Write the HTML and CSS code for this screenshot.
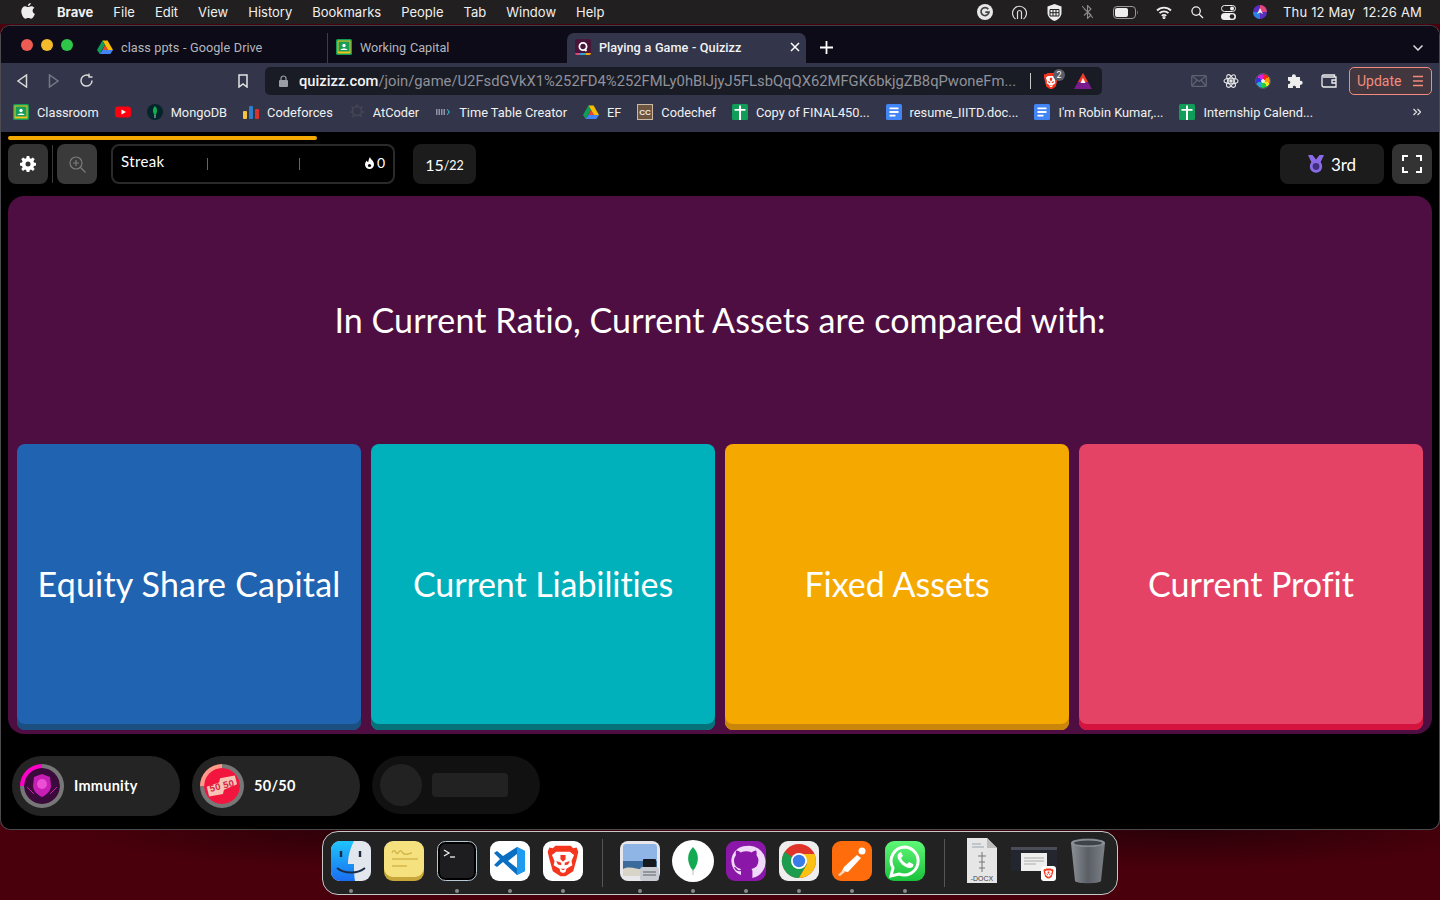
FILE: index.html
```html
<!DOCTYPE html>
<html lang="en">
<head>
    <meta charset="UTF-8">
    <meta name="viewport" content="width=device-width, initial-scale=1.0">
    <title>Playing a Game - Quizizz</title>
    <link rel="stylesheet" href="styles.css">
</head>
<body>
    <svg class="defs" width="0" height="0">
        <defs>
            <linearGradient id="finderblue" x1="0" y1="0" x2="0" y2="1"><stop offset="0" stop-color="#1fc4fb"/><stop offset="1" stop-color="#1a6ef0"/></linearGradient>
            <linearGradient id="wagreen" x1="0" y1="0" x2="0" y2="1"><stop offset="0" stop-color="#5ff777"/><stop offset="1" stop-color="#1ac23c"/></linearGradient>
            <linearGradient id="trash" x1="0" y1="0" x2="1" y2="0"><stop offset="0" stop-color="#8b9197"/><stop offset=".5" stop-color="#5a5f65"/><stop offset="1" stop-color="#7b8187"/></linearGradient>
        </defs>
        <symbol id="drive" viewBox="0 0 16 16">
            <path d="M5.400 1.500h5.200L16 11h-5.200z" fill="#fbbc04"/>
            <path d="M5.400 1.500 8 6 2.700 15 0 11z" fill="#0f9d58"/>
            <path d="M5.400 11H16l-2.700 4H2.700z" fill="#4285f4"/>
            <path d="M5.400 11 8 6l2.800 5z" fill="#ea4335"/>
        </symbol>
        <symbol id="classroom" viewBox="0 0 16 16">
            <rect width="16" height="16" rx="1.500" fill="#0f9d58"/>
            <rect x="1.500" y="1.500" width="13" height="13" fill="#f7c31b"/>
            <rect x="2.500" y="2.500" width="11" height="10" fill="#169d5a"/>
            <circle cx="8" cy="6.500" r="1.700" fill="#fff"/>
            <path d="M4.500 11c.4-2 6.600-2 7 0z" fill="#fff"/>
        </symbol>
        <symbol id="sheet" viewBox="0 0 16 16">
            <rect width="16" height="16" rx="1.500" fill="#0f9d58"/>
            <path d="M2.500 5H7V1.500h2V5h4.500v1.700H9V16H7V6.700H2.500z" fill="#fff"/>
        </symbol>
        <symbol id="doc" viewBox="0 0 16 16">
            <rect width="16" height="16" rx="1.500" fill="#4285f4"/>
            <path d="M3.500 3.500h9v1.800h-9zM3.500 7.100h9v1.800h-9zM3.500 10.700h6v1.800h-6z" fill="#fff"/>
        </symbol>
        <symbol id="bravelion" viewBox="0 0 40 40">
            <path d="M11 2h18l3 3 4-1 2 5-2 9-4 14-9 6h-6l-9-6L4 18 2 9l2-5 4 1z" fill="#f4361e"/>
            <path d="M12 9h16l5 4-3 7 1 5-7 4-1 4-3 1-3-1-1-4-7-4 1-5-3-7z" fill="#fff"/>
            <path d="M12 20l6 2v3l-4-1zM28 20l-6 2v3l4-1zM17 29h6l-3 2zM17 13h6v5l-3 3-3-3z" fill="#f4361e"/>
        </symbol>
    </svg>

    <header class="menubar">
        <svg class="apple" width="14" height="17" viewBox="0 0 14 17"><path d="M9.800 0c.1 1.300-1.300 3-2.900 2.900C6.700 1.500 8.300.1 9.800 0zM7 4.100c.8 0 1.900-.9 3.400-.9 1.100 0 2.300.6 3 1.600-2.600 1.500-2.200 5 .5 6.100-.8 2-2.300 4.800-3.800 4.800-1.100 0-1.500-.7-2.800-.7s-1.800.7-2.800.7C2.600 15.700.3 11.500.3 8.300c0-3 1.900-5 3.900-5 1.200 0 2.100.8 2.800.8z" fill="#eee"/></svg>
        <nav class="menus">
            <span class="app-name">Brave</span>
            <span>File</span><span>Edit</span><span>View</span><span>History</span><span>Bookmarks</span><span>People</span><span>Tab</span><span>Window</span><span>Help</span>
        </nav>
        <div class="status">
            <svg width="16" height="16" viewBox="0 0 16 16"><circle cx="8" cy="8" r="8" fill="#e8e8e8"/><path d="M11.300 5.200A4 4 0 1 0 12 8.200H8.300" fill="none" stroke="#444" stroke-width="1.700"/></svg>
            <svg width="15" height="16" viewBox="0 0 15 16" fill="none" stroke="#ddd" stroke-width="1.200"><path d="M3.500 15A7 7 0 1 1 11.500 15"/><path d="M5.500 15V8.500a2 2 0 0 1 4 0V15"/></svg>
            <svg class="st-wide" width="15" height="17" viewBox="0 0 15 17"><path d="M7.500 0l7 2.500V9c0 4-4 7-7 8-3-1-7-4-7-8V2.500z" fill="#eee"/><path d="M3 5.500h9v6.500H3zM3 8.700h9M6 5.500V12M9 5.500V12" fill="none" stroke="#222"/></svg>
            <svg class="st-wide" width="11" height="14" viewBox="0 0 11 14" fill="none" stroke="#8c8c8c" stroke-width="1.100"><path d="M2 3.500l7 6.500-3.500 3.500V.5L9 4 2 10.500M0 1l11 12"/></svg>
            <svg class="st-wide" width="26" height="13" viewBox="0 0 26 13"><rect x=".5" y=".5" width="22" height="12" rx="3.500" fill="none" stroke="#999"/><rect x="2" y="2" width="13" height="9" rx="2" fill="#eee"/><path d="M24 4.500c1 .5 1 3.500 0 4z" fill="#888"/></svg>
            <svg class="st-tight" width="16" height="13" viewBox="0 0 16 13" fill="none" stroke="#eee" stroke-width="1.800"><path d="M1 4.500a10 10 0 0 1 14 0M3.500 7.200a6.400 6.400 0 0 1 9 0M5.800 9.800a3 3 0 0 1 4.400 0"/><circle cx="8" cy="11.600" r=".6"/></svg>
            <svg width="13" height="13" viewBox="0 0 14 14" fill="none" stroke="#eee" stroke-width="1.400"><circle cx="5.500" cy="5.500" r="4.500"/><path d="M8.800 8.800 13 13"/></svg>
            <svg class="st-tight" width="15" height="15" viewBox="0 0 15 15"><rect x=".5" y=".5" width="14" height="6" rx="3" fill="none" stroke="#eee"/><circle cx="11" cy="3.500" r="2" fill="#eee"/><rect y="8" width="15" height="7" rx="3.500" fill="#eee"/><circle cx="11" cy="11.500" r="2.300" fill="#222"/></svg>
            <svg class="st-tight" width="14" height="14" viewBox="0 0 14 14"><circle cx="7" cy="7" r="7" fill="#5a2fc0"/><path d="M7 0a7 7 0 0 1 7 7H7z" fill="#e0457b"/><path d="M0 7a7 7 0 0 0 7 7V7z" fill="#2f7fe0"/><path d="M7 3l3 6-3-1.500L4 9z" fill="#eee"/></svg>
            <span class="clock">Thu 12 May&nbsp; 12:26 AM</span>
        </div>
    </header>

    <main class="window">
        <div class="tabstrip">
            <div class="lights"><i class="red"></i><i class="yellow"></i><i class="green"></i></div>
            <div class="tab tab-first"><svg class="ico"><use href="#drive"/></svg><span>class ppts - Google Drive</span></div>
            <div class="tab tab-second"><svg class="ico"><use href="#classroom"/></svg><span>Working Capital</span></div>
            <div class="tab tab-active">
                <svg class="ico" viewBox="0 0 16 16"><rect width="16" height="16" rx="2" fill="#4a1538"/><path d="M0 14h5v2H2a2 2 0 0 1-2-2z" fill="#e0457b"/><path d="M5 14h6v2H5z" fill="#2ca5d6"/><path d="M11 14h5a2 2 0 0 1-2 2h-3z" fill="#f5a800"/><circle cx="8" cy="7.500" r="3.600" fill="none" stroke="#fff" stroke-width="1.800"/><path d="M9.500 10l2 2" stroke="#fff" stroke-width="1.800"/></svg>
                <span>Playing a Game - Quizizz</span>
                <svg class="tab-close" width="10" height="10" viewBox="0 0 10 10" stroke="#fff" stroke-width="1.500"><path d="M1 1l8 8M9 1l-8 8"/></svg>
            </div>
            <svg class="tab-new" width="13" height="13" viewBox="0 0 13 13" stroke="#fff" stroke-width="1.800"><path d="M6.500 0v13M0 6.500h13"/></svg>
            <svg class="tab-list" width="10" height="6" viewBox="0 0 10 6" fill="none" stroke="#ddd" stroke-width="1.500"><path d="M.5.500l4.500 4.500L9.500.500"/></svg>
        </div>

        <div class="toolbar">
            <svg class="nav-back" width="12" height="14" viewBox="0 0 12 14" fill="none" stroke="#d8d8d8" stroke-width="1.500"><path d="M10.500 1v12L2 7z"/></svg>
            <svg class="nav-fwd" width="12" height="14" viewBox="0 0 12 14" fill="none" stroke="#767885" stroke-width="1.500"><path d="M1.500 1v12L10 7z"/></svg>
            <svg class="nav-reload" width="15" height="15" viewBox="0 0 15 15" fill="none" stroke="#d8d8d8" stroke-width="1.500"><path d="M13 7.500A5.500 5.500 0 1 1 10.500 3"/><path d="M10 .5v3.500h3.500" stroke-width="1.300"/></svg>
            <svg class="nav-mark" width="10" height="14" viewBox="0 0 10 14" fill="none" stroke="#e4e4e4" stroke-width="1.500"><path d="M1 1h8v12L5 10l-4 3z"/></svg>
            <div class="urlbar">
                <svg width="9" height="12" viewBox="0 0 9 12"><rect y="5" width="9" height="7" rx="1" fill="#9b9da6"/><path d="M2 5V3.500a2.500 2.500 0 0 1 5 0V5" fill="none" stroke="#9b9da6" stroke-width="1.200"/></svg>
                <span class="url"><b>quizizz.com</b>/join/game/U2FsdGVkX1%252FD4%252FMLy0hBlJjyJ5FLsbQqQX62MFGK6bkjgZB8qPwoneFm...</span>
                <i class="url-sep"></i>
                <div class="shield"><svg width="16" height="18" viewBox="0 0 40 40" preserveAspectRatio="none"><use href="#bravelion"/></svg><em>2</em></div>
                <svg class="bat" width="18" height="16" viewBox="0 0 18 16"><path d="M9 0l9 16H0z" fill="#7a1a8c"/><path d="M9 0l5 9H4z" fill="#ef3e23"/><path d="M9 5l2.500 5h-5z" fill="#fff"/></svg>
            </div>
            <div class="extensions">
                <svg width="16" height="12" viewBox="0 0 16 12" fill="none" stroke="#5e6070" stroke-width="1.300"><rect x=".7" y=".7" width="14.600" height="10.600" rx="1"/><path d="M1 1l7 5.500L15 1M1 11l5-6M15 11l-5-6"/></svg>
                <svg width="16" height="16" viewBox="0 0 16 16" fill="none" stroke="#e4e4e4" stroke-width="1.100"><ellipse cx="8" cy="8" rx="7" ry="2.800"/><ellipse cx="8" cy="8" rx="7" ry="2.800" transform="rotate(60 8 8)"/><ellipse cx="8" cy="8" rx="7" ry="2.800" transform="rotate(120 8 8)"/><circle cx="8" cy="8" r="1.200" fill="#e4e4e4"/></svg>
                <div class="colorwheel"></div>
                <svg width="16" height="16" viewBox="0 0 16 16"><path d="M1 4h4c-1-3 4-4 4 0h4v4c3-1 4 4 0 4v3H9c.5-3-4-3-3 0H1v-4c3 1 3-4 0-3z" fill="#eee"/></svg>
                <svg class="wallet" width="16" height="14" viewBox="0 0 16 14" fill="none" stroke="#eee" stroke-width="1.300"><path d="M13.500 3V1H3A2 2 0 0 0 1 3v8a2 2 0 0 0 2 2h12V3H2"/><path d="M15 6h-4v3h4"/></svg>
            </div>
            <div class="update"><span>Update</span><svg width="10" height="12" viewBox="0 0 10 12" stroke="#f28b7d" stroke-width="1.600"><path d="M0 1.500h10M0 6h10M0 10.500h10"/></svg></div>
        </div>

        <div class="bookmarks">
            <div class="bm"><svg class="ico"><use href="#classroom"/></svg><span>Classroom</span></div>
            <div class="bm"><svg class="ico" viewBox="0 0 16 16"><rect y="2.500" width="16" height="11" rx="3" fill="#f01"/><path d="M6.500 5.500 11 8l-4.500 2.500z" fill="#fff"/></svg></div>
            <div class="bm"><svg class="ico" viewBox="0 0 16 16"><circle cx="8" cy="8" r="8" fill="#04242b"/><path d="M8 2c2.500 2.500 3 6 0 10-3-4-2.500-7.500 0-10z" fill="#13aa52"/><path d="M8 11v3" stroke="#b8c4c2"/></svg><span>MongoDB</span></div>
            <div class="bm"><svg class="ico" viewBox="0 0 16 16"><rect y="7" width="4" height="8" rx="1" fill="#f6c43d"/><rect x="6" y="2" width="4" height="13" rx="1" fill="#2f7fc8"/><rect x="12" y="5" width="4" height="10" rx="1" fill="#d8322e"/></svg><span>Codeforces</span></div>
            <div class="bm"><svg class="ico" viewBox="0 0 16 16" fill="none" stroke="#444653" stroke-width="1.500"><circle cx="8" cy="7" r="4.500"/><path d="M8 0v2M1 8h2.500M13 8h2.500M2.500 2.500l2 2M13.500 2.500l-2 2M3 13l2.500-2.500M13 13l-2.500-2.500"/></svg><span>AtCoder</span></div>
            <div class="bm"><svg class="ico" viewBox="0 0 16 16"><path d="M1 5h1.500v6H1zM3.500 5H5v6H3.500zM6 5h1.500v6H6zM8.500 5H10v6H8.500z" fill="#8f93a3"/><path d="M11.500 5h1l2.500 3-2.500 3h-1l2-3z" fill="#29b6c6"/></svg><span>Time Table Creator</span></div>
            <div class="bm"><svg class="ico"><use href="#drive"/></svg><span>EF</span></div>
            <div class="bm"><svg class="ico" viewBox="0 0 16 16"><rect width="16" height="16" fill="#c9b9a5"/><rect x="1" y="1" width="14" height="14" fill="#6e5540"/><text x="8" y="11" font-size="8" font-weight="700" text-anchor="middle" fill="#f1ebe2" font-family="Liberation Sans">CC</text></svg><span>Codechef</span></div>
            <div class="bm"><svg class="ico"><use href="#sheet"/></svg><span>Copy of FINAL450...</span></div>
            <div class="bm"><svg class="ico"><use href="#doc"/></svg><span>resume_IIITD.doc...</span></div>
            <div class="bm"><svg class="ico"><use href="#doc"/></svg><span>I'm Robin Kumar,...</span></div>
            <div class="bm"><svg class="ico"><use href="#sheet"/></svg><span>Internship Calend...</span></div>
            <svg class="bm-more" width="8" height="8" viewBox="0 0 8 8" fill="none" stroke="#ddd" stroke-width="1.300"><path d="M.5 1l3 3-3 3M4.500 1l3 3-3 3"/></svg>
        </div>

        <section class="game">
            <div class="progress"><div class="progress-fill" style="width: 309px"></div></div>
            <div class="topbar">
                <button class="square">
                    <svg width="16" height="16" viewBox="0 0 16 16"><path d="M6.700 0h2.600l.4 2.200 1.300.6L12.900 1.500l1.800 1.800-1.300 1.900.6 1.300 2 .4v2.600l-2 .4-.6 1.300 1.300 1.900-1.800 1.800-1.900-1.300-1.300.6-.4 2.200H6.700l-.4-2.200-1.300-.6-1.900 1.300-1.800-1.800 1.300-1.900-.6-1.300-2-.4V6.900l2-.4.6-1.300-1.300-1.900 1.800-1.800L5 2.800l1.300-.6z" fill="#fff"/><circle cx="8" cy="8" r="2.500" fill="#333"/></svg>
                </button>
                <i class="divider"></i>
                <button class="square square-dim">
                    <svg width="17" height="17" viewBox="0 0 17 17" fill="none" stroke="#7c7c7c" stroke-width="1.200"><circle cx="7" cy="7" r="6"/><path d="M11.500 11.500 16.500 16.500M4 7h6M7 4v6"/></svg>
                </button>
                <div class="streak">
                    <span class="streak-label">Streak</span>
                    <i class="tick tick-one"></i>
                    <i class="tick tick-two"></i>
                    <span class="streak-count"><svg width="9" height="12" viewBox="0 0 9 12"><path d="M5 0c.5 2.500 4 3.500 4 7.500a4.500 4.500 0 0 1-9 0C0 5.500 1 4.500 2 3.500c.2 1 .6 1.500 1.200 1.700C3.500 3.500 4 1.500 5 0z" fill="#fff"/><circle cx="4.500" cy="8.500" r="1.600" fill="#000"/></svg>0</span>
                </div>
                <div class="count"><b>15</b>/22</div>
                <div class="rank">
                    <svg width="16" height="18" viewBox="0 0 16 18"><path d="M0 0h4.500L8 4.500 11.500 0H16l-4 8.500H4z" fill="#8a6ae6"/><circle cx="8" cy="11.500" r="4.800" fill="#3f2f7c" stroke="#8a6ae6" stroke-width="2.800"/></svg>
                    <span>3rd</span>
                </div>
                <button class="square">
                    <svg width="20" height="18" viewBox="0 0 20 18" fill="none" stroke="#fff" stroke-width="2"><path d="M1 6V1h5M14 1h5v5M19 12v5h-5M6 17H1v-5"/></svg>
                </button>
            </div>

            <div class="panel">
                <h1 class="question">In Current Ratio, Current Assets are compared with:</h1>
                <div class="options">
                    <div class="option option-blue">Equity Share Capital</div>
                    <div class="option option-teal">Current Liabilities</div>
                    <div class="option option-amber">Fixed Assets</div>
                    <div class="option option-rose">Current Profit</div>
                </div>
            </div>

            <div class="powerups">
                <div class="powerup">
                    <div class="ring ring-pink">
                        <svg width="36" height="36" viewBox="0 0 36 36"><circle cx="18" cy="18" r="18" fill="#3a0a3a"/><path d="M18 6l8 3 1 9c0 5-5 9-9 11-4-2-9-6-9-11l1-9z" fill="#c81eb4"/><circle cx="18" cy="16" r="5" fill="#ea4fd6"/><path d="M3 19l7 7M33 19l-7 7" stroke="#c81eb4"/></svg>
                    </div>
                    <span>Immunity</span>
                </div>
                <div class="powerup">
                    <div class="ring ring-salmon">
                        <svg width="36" height="36" viewBox="0 0 36 36"><circle cx="18" cy="18" r="18" fill="#f2163f"/><g transform="rotate(-14 18 18)"><path d="M3 15l13-1 2-4 15 1v9l-14 2-2 4-14-1z" fill="#f7c5b8"/><text x="18" y="21" font-size="9.500" font-weight="700" text-anchor="middle" fill="#d8233f" font-family="Liberation Sans">50 50</text></g></svg>
                    </div>
                    <span>50/50</span>
                </div>
                <div class="powerup powerup-empty">
                    <div class="blank-circle"></div>
                    <div class="blank-label"></div>
                </div>
            </div>
        </section>
    </main>

    <footer class="dock-wrap">
        <div class="dock">
            <div class="dock-item on">
                <svg viewBox="0 0 40 40"><rect width="40" height="40" rx="9" fill="#e2e7ee"/><path d="M9 0h14c-3 6-6 14-6 23h6c0 6 0 12 1 17H9a9 9 0 0 1-9-9V9a9 9 0 0 1 9-9z" fill="url(#finderblue)"/><path d="M10 10v6M29 10v6" stroke="#1d2a44" stroke-width="2.400"/><path d="M6 27c7 6 21 6 28 0" fill="none" stroke="#1d2a44" stroke-width="1.800"/></svg>
            </div>
            <div class="dock-item">
                <svg viewBox="0 0 40 40"><rect y="4" width="40" height="36" rx="9" fill="#c9a63a"/><rect width="40" height="36" rx="9" fill="#f5e27e"/><path d="M8 12c3-7 4 3 6 0s3-3 5 0 6 0 9 0M8 18h26M8 25h15" fill="none" stroke="#d3b84c" stroke-width="1.500"/></svg>
            </div>
            <div class="dock-item on">
                <svg viewBox="0 0 40 40"><rect x=".5" y=".5" width="39" height="39" rx="8" fill="#000" stroke="#b8c8d4"/><rect x="3" y="3" width="34" height="34" rx="5" fill="#1d1d1f"/><path d="M7 9l5 3-5 3" fill="none" stroke="#eee" stroke-width="1.300"/><path d="M13 16h5" stroke="#eee" stroke-width="1.300"/></svg>
            </div>
            <div class="dock-item on">
                <svg viewBox="0 0 40 40"><rect width="40" height="40" rx="9" fill="#fff"/><path d="M27 6l8 4v20l-8 4-14-13-6 5-3-2 6-6-6-6 3-2 6 5z" fill="#0a6fc2"/><path d="M27 13v14l-9-7z" fill="#fff"/><path d="M27 6l8 4v20l-8 4z" fill="#1f9cf0"/></svg>
            </div>
            <div class="dock-item on">
                <svg viewBox="0 0 40 40"><rect width="40" height="40" rx="9" fill="#fff"/><use href="#bravelion" x="3" y="2" width="34" height="36"/></svg>
            </div>
            <i class="dock-sep"></i>
            <div class="dock-item on">
                <svg viewBox="0 0 40 40"><rect width="40" height="40" rx="8" fill="#e8e8ec"/><rect x="3" y="3" width="34" height="32" rx="3" fill="#8fb4e6"/><path d="M3 20h34v15H3z" fill="#3c6a9a"/><path d="M3 28c8-4 16 2 22 0v7H3z" fill="#d8d4c8"/><rect x="20" y="26" width="19" height="14" rx="3" fill="#c8ccd2"/><rect x="23" y="18" width="13" height="8" rx="1" fill="#15181d"/><path d="M23 31h13M23 34h13" stroke="#5a6068"/></svg>
            </div>
            <div class="dock-item on">
                <svg viewBox="0 0 40 40"><circle cx="20" cy="20" r="21" fill="#fff"/><path d="M20 6c6 6 7 15 0 24-7-9-6-18 0-24z" fill="#13aa52"/><path d="M20 28v6" stroke="#b8c4c2"/></svg>
            </div>
            <div class="dock-item on">
                <svg viewBox="0 0 40 40"><rect width="40" height="40" rx="9" fill="#8a17a8"/><path d="M20 5a15 15 0 0 0-5 29v-4c-5 1-6-2-7-4 2 0 3 2 4 3 2 .5 3 0 3-1-4-1-7-3-7-9 0-2 1-3 2-5-.5-1.500-.3-3 .2-4.500 2 0 3.500 1 4.500 2a14 14 0 0 1 11 0c1-1 2.500-2 4.500-2 .5 1.500.7 3 .2 4.500 1 2 2 3 2 5 0 6-3 8-7 9 1 1 1 2 1 3v6A15 15 0 0 0 20 5z" fill="#f0d8f8"/></svg>
            </div>
            <div class="dock-item on">
                <svg viewBox="0 0 40 40"><rect width="40" height="40" rx="9" fill="#eee"/><circle cx="20" cy="20" r="17" fill="#e0332a"/><path d="M20 20 5.500 11A17 17 0 0 0 20 37l8-14z" fill="#1c9d4d"/><path d="M20 37a17 17 0 0 0 15.500-24H20l8 10z" fill="#fbc113"/><circle cx="20" cy="20" r="8" fill="#fff"/><circle cx="20" cy="20" r="6.200" fill="#3b7de8"/></svg>
            </div>
            <div class="dock-item on">
                <svg viewBox="0 0 40 40"><rect width="40" height="40" rx="9" fill="#ff6c0c"/><circle cx="30" cy="10" r="3.500" fill="#fff"/><path d="M10 30l2-4 13-12 4 3-13 14z" fill="#fff"/><path d="M6 34l5-5 2 2-5 4z" fill="#ffd7bc"/></svg>
            </div>
            <div class="dock-item on">
                <svg viewBox="0 0 40 40"><rect width="40" height="40" rx="9" fill="url(#wagreen)"/><path d="M20 6a14 14 0 0 0-12 21l-2 8 8-2a14 14 0 1 0 6-27z" fill="none" stroke="#fff" stroke-width="3"/><path d="M14 12c-2 2-2 5 1 9s7 6 10 6 4-3 3-4l-4-2-2 2c-2-1-5-3-6-6l2-2-2-4z" fill="#fff"/></svg>
            </div>
            <i class="dock-sep"></i>
            <div class="dock-item">
                <svg viewBox="0 0 40 46" class="tall"><path d="M5 0h20l10 10v35H5z" fill="#e6e6e6"/><path d="M25 0v10h10z" fill="#bcbcbc"/><path d="M10 6h9M10 9h12" stroke="#9aa4ae"/><path d="M20 14v20M16 18h8M17 24h6M17 30h6" stroke="#777"/><text x="20" y="43" font-size="7" text-anchor="middle" fill="#444" font-family="Liberation Sans">-DOCX</text></svg>
            </div>
            <div class="dock-item">
                <svg viewBox="0 0 48 40" class="wide"><rect y="6" width="46" height="24" fill="#23252f"/><rect y="6" width="46" height="3" fill="#4a4c58"/><rect x="10" y="12" width="26" height="18" fill="#eee"/><path d="M13 17h20M13 20h20M13 23h12" stroke="#aaa"/><rect x="30" y="25" width="15" height="15" rx="3" fill="#fff"/><use href="#bravelion" x="32" y="27" width="11" height="11"/></svg>
            </div>
            <div class="dock-item">
                <svg viewBox="0 0 40 46" class="tall"><path d="M3 5c0-6 34-6 34 0l-4 38c-1 3-25 3-26 0z" fill="url(#trash)"/><ellipse cx="20" cy="5" rx="17" ry="4" fill="#8a9096"/><ellipse cx="20" cy="5" rx="14" ry="2.500" fill="#3e4348"/></svg>
            </div>
        </div>
    </footer>
</body>
</html>
```

FILE: styles.css
```css
body, html {
    margin: 0;
    padding: 0;
    width: 100%;
    height: 100%;
    overflow: hidden;
}
body {
    display: flex;
    flex-direction: column;
    background:
        radial-gradient(ellipse 320px 42px at 27% 828px, #2a0108, transparent),
        radial-gradient(ellipse 320px 42px at 82% 828px, #2a0108, transparent),
        #49000c;
    font-family: "Inter", "Liberation Sans", sans-serif;
    color: #fff;
}
.defs {
    position: absolute;
}
.ico {
    width: 16px;
    height: 16px;
    flex: none;
}

/* mac menu bar */
.menubar {
    height: 24px;
    flex: none;
    display: flex;
    align-items: center;
    background: #211f1f;
    font-size: 13px;
    color: #f0f0f0;
}
.apple {
    margin-left: 21px;
    margin-top: -2px;
}
.menus {
    display: flex;
    gap: 20px;
    margin-left: 22px;
}
.app-name {
    font-weight: 700;
}
.status {
    margin-left: auto;
    margin-right: 18px;
    display: flex;
    align-items: center;
    gap: 19px;
}
.st-wide {
    margin-left: 1px;
}
.st-tight {
    margin-left: -2px;
}
.clock {
    margin-left: -3px;
    letter-spacing: .2px;
}

/* browser window */
.window {
    flex: none;
    height: 805px;
    margin-top: 1px;
    box-sizing: border-box;
    border: 1px solid #4b4b4f;
    border-top-color: #3d3f4a;
    border-radius: 10px;
    background: #000;
    overflow: hidden;
    display: flex;
    flex-direction: column;
}
.tabstrip {
    height: 37px;
    flex: none;
    display: flex;
    align-items: flex-end;
    background: #0c0b17;
    position: relative;
}
.lights {
    position: absolute;
    left: 20px;
    top: 13px;
    display: flex;
    gap: 8px;
}
.lights i {
    width: 12px;
    height: 12px;
    border-radius: 50%;
}
.lights .red { background: #ee5b52; }
.lights .yellow { background: #f5b92c; }
.lights .green { background: #2fc548; }
.tab {
    height: 30px;
    display: flex;
    align-items: center;
    gap: 8px;
    padding-bottom: 2px;
    font-size: 12.7px;
    word-spacing: .5px;
    color: #b5b6bd;
    font-family: "Roboto", sans-serif;
    box-sizing: border-box;
}
.tab-first {
    margin-left: 96px;
    width: 231px;
    border-right: 1px solid #3c3d48;
}
.tab-second {
    padding-left: 8px;
    width: 239px;
}
.tab-active {
    width: 239px;
    padding-left: 8px;
    background: #33364a;
    border-radius: 7px 7px 0 0;
    color: #f2f2f2;
    font-weight: 500;
}
.tab-close {
    margin-left: auto;
    margin-right: 6px;
}
.tab-new {
    margin: 0 0 9px 14px;
}
.tab-list {
    margin: 0 16px 12px auto;
}

.toolbar {
    height: 35px;
    flex: none;
    display: flex;
    align-items: center;
    background: #33364a;
}
.nav-back { margin-left: 15px; }
.nav-fwd { margin-left: 20px; }
.nav-reload { margin-left: 19px; }
.nav-mark { margin-left: 144px; }
.urlbar {
    margin-left: 17px;
    width: 837px;
    height: 28px;
    box-sizing: border-box;
    padding: 0 8px 0 14px;
    background: #1a1c25;
    border-radius: 5px;
    display: flex;
    align-items: center;
}
.url {
    margin-left: 11px;
    width: 717px;
    flex: none;
    font-family: "Roboto", sans-serif;
    font-size: 14.77px;
    color: #8f919b;
    white-space: nowrap;
    overflow: hidden;
}
.url b {
    color: #f2f2f2;
    font-weight: 500;
}
.url-sep {
    width: 1px;
    height: 16px;
    background: #c8c8c8;
    margin-left: 14px;
}
.shield {
    position: relative;
    margin-left: 12px;
    display: flex;
}
.shield em {
    position: absolute;
    left: 10px;
    top: -3px;
    width: 12px;
    height: 12px;
    border-radius: 50%;
    background: #5a5c68;
    font-size: 9px;
    font-style: normal;
    text-align: center;
    line-height: 12px;
}
.bat {
    margin-left: 15px;
}
.extensions {
    margin-left: 89px;
    display: flex;
    align-items: center;
    gap: 16px;
}
.colorwheel {
    width: 14px;
    height: 14px;
    border-radius: 50%;
    margin: 0 1px;
    background:
        radial-gradient(circle, #eee 0 1.500px, transparent 2px),
        conic-gradient(#f22 0 15%, #f90 15% 30%, #ee2 30% 40%, #2c4 40% 55%, #2ad 55% 70%, #33e 70% 85%, #d2d 85% 100%);
    outline: 1px solid #555866;
}
.wallet {
    margin-left: 2px;
}
.update {
    margin-left: 12px;
    width: 83px;
    height: 28px;
    box-sizing: border-box;
    border: 1px solid #f28b7d;
    border-radius: 5px;
    background: #43373f;
    display: flex;
    align-items: center;
    justify-content: space-between;
    padding: 0 8px 0 7px;
    color: #f28b7d;
    font-size: 14px;
    font-family: "Roboto", sans-serif;
}

.bookmarks {
    height: 34px;
    flex: none;
    display: flex;
    align-items: center;
    padding: 0 0 6px 12px;
    box-sizing: border-box;
    background: #33364a;
    gap: 16px;
    font-family: "Roboto", sans-serif;
    font-size: 12.8px;
    color: #f0f0f0;
}
.bm {
    display: flex;
    align-items: center;
    gap: 8px;
}
.bm-more {
    margin-left: auto;
    margin-right: 18px;
}

/* quiz */
.game {
    flex: 1;
    display: flex;
    flex-direction: column;
    padding: 4px 7px 0;
    font-family: "Lato", sans-serif;
    font-variant-ligatures: none;
}
.progress {
    height: 4px;
    flex: none;
}
.progress-fill {
    height: 4px;
    background: #f5a800;
    border-radius: 2px;
}
.topbar {
    margin-top: 4px;
    height: 40px;
    flex: none;
    display: flex;
    align-items: center;
}
.square {
    width: 40px;
    height: 40px;
    flex: none;
    border: 0;
    padding: 0;
    border-radius: 8px;
    background: #333;
    display: flex;
    align-items: center;
    justify-content: center;
}
.square-dim {
    background: #3a3a3a;
}
.divider {
    width: 1px;
    height: 38px;
    background: #3a3a3a;
    margin: 0 4px;
}
.streak {
    position: relative;
    margin-left: 14px;
    width: 284px;
    height: 40px;
    box-sizing: border-box;
    border: 2px solid #2a2a2a;
    border-radius: 8px;
    font-size: 15px;
}
.streak-label {
    position: absolute;
    left: 8px;
    top: 6px;
    letter-spacing: .35px;
}
.tick {
    position: absolute;
    top: 12px;
    width: 1px;
    height: 12px;
    background: #666;
}
.tick-one { left: 94px; }
.tick-two { left: 186px; }
.streak-count {
    position: absolute;
    right: 8px;
    top: 8px;
    display: flex;
    align-items: center;
    gap: 3px;
    font-size: 14px;
}
.count {
    margin-left: 18px;
    width: 63px;
    height: 40px;
    border-radius: 8px;
    background: #1c1c1c;
    display: flex;
    align-items: center;
    justify-content: center;
    font-size: 12.5px;
    padding-top: 2px;
    box-sizing: border-box;
}
.count b {
    font-size: 16px;
    font-weight: 400;
    margin-top: -2px;
}
.rank {
    margin-left: auto;
    margin-right: 8px;
    width: 104px;
    height: 40px;
    border-radius: 8px;
    background: #1c1c1c;
    display: flex;
    align-items: center;
    justify-content: center;
    gap: 7px;
    font-size: 17px;
}

.panel {
    margin-top: 12px;
    height: 538px;
    flex: none;
    box-sizing: border-box;
    padding: 0 9px 4px;
    background: #4e0e41;
    border-radius: 16px;
    display: flex;
    flex-direction: column;
}
.question {
    flex: 1;
    margin: 0;
    padding-bottom: 2px;
    display: flex;
    align-items: center;
    justify-content: center;
    font-size: 34px;
    font-weight: 400;
    letter-spacing: .08px;
}
.options {
    display: flex;
    gap: 10px;
}
.option {
    flex: 1;
    height: 286px;
    box-sizing: border-box;
    padding-bottom: 8px;
    border-radius: 8px;
    display: flex;
    align-items: center;
    justify-content: center;
    font-size: 34px;
}
.option-blue { background: #2063b0; box-shadow: inset 0 -6px 0 #1a4f80; letter-spacing: .2px; }
.option-teal { background: #00b0bb; box-shadow: inset 0 -6px 0 #067178; letter-spacing: -.1px; }
.option-amber { background: #f5a800; box-shadow: inset 0 -6px 0 #c9860a; }
.option-rose { background: #e44366; box-shadow: inset 0 -6px 0 #d5133f; }

.powerups {
    margin-top: 22px;
    margin-left: 4px;
    display: flex;
    gap: 12px;
    align-items: flex-start;
}
.powerup {
    width: 168px;
    height: 60px;
    border-radius: 30px;
    background: #242424;
    display: flex;
    align-items: center;
    gap: 10px;
    padding: 0 0 1px 8px;
    box-sizing: border-box;
    font-weight: 700;
    font-size: 14.5px;
    letter-spacing: .25px;
}
.ring {
    width: 44px;
    height: 44px;
    border-radius: 50%;
    display: flex;
    align-items: center;
    justify-content: center;
}
.ring-pink { background: conic-gradient(#777 0 75%, #ff00c8 75% 100%); }
.ring-salmon { background: conic-gradient(#777 0 75%, #ff9a8a 75% 100%); }
.ring svg {
    border-radius: 50%;
    display: block;
}
.powerup-empty {
    height: 58px;
    background: #111;
}
.blank-circle {
    width: 42px;
    height: 42px;
    border-radius: 50%;
    background: #222;
}
.blank-label {
    width: 76px;
    height: 24px;
    border-radius: 4px;
    background: #222;
}

/* dock */
.dock-wrap {
    flex: none;
    display: flex;
    justify-content: center;
    margin-top: 1px;
}
.dock {
    width: 796px;
    height: 64px;
    box-sizing: border-box;
    border: 1px solid #c8c8c8;
    border-radius: 16px;
    background: #222;
    display: flex;
    align-items: flex-start;
    padding: 9px 0 0 1.5px;
}
.dock-item {
    width: 53px;
    height: 40px;
    flex: none;
    position: relative;
    display: flex;
    justify-content: center;
    align-items: center;
}
.dock-item svg {
    width: 40px;
    height: 40px;
    display: block;
    overflow: visible;
}
.dock-item svg.tall {
    height: 46px;
}
.dock-item svg.wide {
    width: 48px;
}
.dock-item.on::after {
    content: "";
    position: absolute;
    left: 24.5px;
    top: 48px;
    width: 4px;
    height: 4px;
    border-radius: 50%;
    background: #8a8a8a;
}
.dock-sep {
    width: 1px;
    height: 48px;
    flex: none;
    background: #555;
    margin: -2px 11px 0 12px;
}
```
